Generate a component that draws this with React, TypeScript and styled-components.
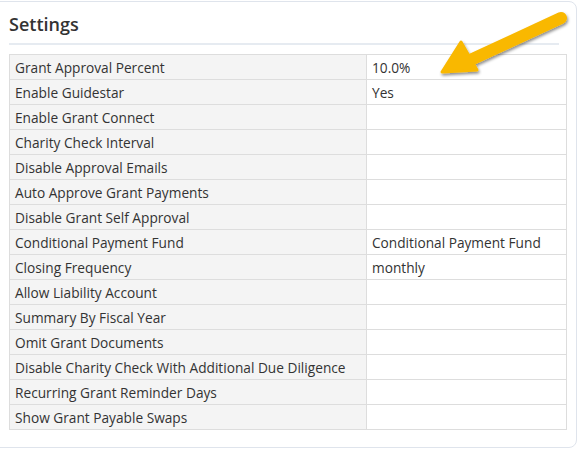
import styled, { createGlobalStyle } from "styled-components";

const settings: { name: string; value: string }[] = [
  { name: "Grant Approval Percent", value: "10.0%" },
  { name: "Enable Guidestar", value: "Yes" },
  { name: "Enable Grant Connect", value: "" },
  { name: "Charity Check Interval", value: "" },
  { name: "Disable Approval Emails", value: "" },
  { name: "Auto Approve Grant Payments", value: "" },
  { name: "Disable Grant Self Approval", value: "" },
  { name: "Conditional Payment Fund", value: "Conditional Payment Fund" },
  { name: "Closing Frequency", value: "monthly" },
  { name: "Allow Liability Account", value: "" },
  { name: "Summary By Fiscal Year", value: "" },
  { name: "Omit Grant Documents", value: "" },
  { name: "Disable Charity Check With Additional Due Diligence", value: "" },
  { name: "Recurring Grant Reminder Days", value: "" },
  { name: "Show Grant Payable Swaps", value: "" },
];

function App() {
  return (
    <>
      <GlobalStyle />
      <Card>
        <Title>Settings</Title>
        <Divider />
        <Table>
          <tbody>
            {settings.map((item) => (
              <tr key={item.name}>
                <LabelCell>{item.name}</LabelCell>
                <ValueCell>{item.value}</ValueCell>
              </tr>
            ))}
          </tbody>
        </Table>
        <Arrow width="130" height="70" viewBox="0 0 130 70">
          <defs>
            <filter id="shadow" x="-20%" y="-20%" width="140%" height="160%">
              <feDropShadow dx="1" dy="2" stdDeviation="1.5" floodColor="#000" floodOpacity="0.45" />
            </filter>
          </defs>
          <g filter="url(#shadow)" fill="#f9b800" stroke="#f9b800" strokeLinecap="round" strokeLinejoin="round">
            <line x1="125" y1="11" x2="30" y2="55" strokeWidth="12" />
            <polygon points="6,65 25,35 41,63" strokeWidth="3" />
          </g>
        </Arrow>
      </Card>
    </>
  );
}

export default App;

const GlobalStyle = createGlobalStyle`
  body {
    margin: 0;
    background: #ffffff;
    font-family: "Open Sans", "DejaVu Sans", sans-serif;
    color: #333333;
  }
`;

const Card = styled.div`
  position: relative;
  box-sizing: border-box;
  width: 587px;
  height: 447px;
  margin: 1px 0 0 -10px;
  padding: 0 18px 0 18px;
  border: 1px solid #dfe4ec;
  border-radius: 8px;
  background: #ffffff;
`;

const Title = styled.h3`
  margin: 0;
  padding: 10px 0 6px;
  font-size: 18px;
  font-weight: 600;
  line-height: 25px;
  color: #333333;
`;

const Divider = styled.hr`
  margin: 0 -1px 9px 0;
  border: 0;
  border-top: 2px solid #e6ebf1;
`;

const Table = styled.table`
  width: 558px;
  border-collapse: collapse;
  font-size: 13.7px;
`;

const LabelCell = styled.td`
  width: 346px;
  height: 24px;
  padding: 0 5px;
  border: 1px solid #dddddd;
  background: #f4f4f4;
  color: #333333;
  white-space: nowrap;
`;

const ValueCell = styled.td`
  height: 24px;
  padding: 0 5px;
  border: 1px solid #dddddd;
  background: #ffffff;
  color: #333333;
  white-space: nowrap;
`;

const Arrow = styled.svg`
  position: absolute;
  top: 5px;
  left: 445px;
  overflow: visible;
`;
